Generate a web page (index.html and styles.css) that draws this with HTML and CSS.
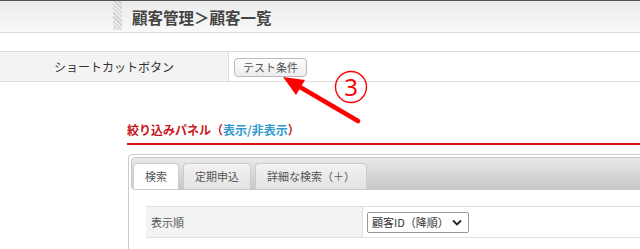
FILE: index.html
```html
<!DOCTYPE html>
<html lang="ja">
<head>
    <meta charset="UTF-8">
    <title>顧客一覧</title>
    <link rel="stylesheet" href="styles.css">
</head>
<body>
<div class="page">
    <div class="header">
        <div class="hatch"></div>
        <h1>顧客管理＞顧客一覧</h1>
    </div>

    <div class="spacer"></div>

    <div class="shortcut">
        <div class="shortcut-label">ショートカットボタン</div>
        <div class="shortcut-body">
            <button class="btn">テスト条件</button>
        </div>
    </div>

    <div class="filter">
        <h2 class="filter-title">絞り込みパネル（<a class="toggle">表示/非表示</a>）</h2>
        <div class="panel">
            <ul class="tabs">
                <li class="tab active">検索</li>
                <li class="tab">定期申込</li>
                <li class="tab">詳細な検索（＋）</li>
            </ul>
            <div class="panel-body">
                <div class="field">
                    <div class="field-label">表示順</div>
                    <div class="field-value">
                        <div class="select">
                            <span>顧客ID（降順）</span>
                            <svg width="10" height="7" viewBox="0 0 10 7"><path d="M1 1.5 L5 5.5 L9 1.5" fill="none" stroke="#222" stroke-width="1.8"/></svg>
                        </div>
                    </div>
                </div>
            </div>
        </div>
    </div>

    <!-- 注釈 -->
    <svg class="note" width="640" height="249" viewBox="0 0 640 249">
        <circle cx="351" cy="87" r="15.5" fill="none" stroke="#f00" stroke-width="1.4"/>
        <text x="351" y="96" text-anchor="middle" class="note-num">3</text>
        <line x1="358" y1="121" x2="294" y2="83.5" stroke="#f00" stroke-width="4.5" stroke-linecap="round"/>
        <polygon points="283,77 305,80 296,95" fill="#f00"/>
    </svg>
</div>
</body>
</html>
```

FILE: styles.css
```css
html, body {
    margin: 0;
    padding: 0;
}

body {
    font-family: "Noto Sans CJK JP", "Noto Sans", sans-serif;
    color: #333;
    background: #fff;
}

.page {
    position: relative;
    width: 640px;
    height: 249px;
    overflow: hidden;
}

.header {
    display: flex;
    align-items: center;
    height: 31px;
    padding-left: 113px;
    border-top: 1px solid #555;
    border-bottom: 1px solid #ddd;
    background: linear-gradient(#ebebeb, #f9f9f9);
}

.hatch {
    align-self: flex-start;
    width: 9px;
    height: 29px;
    margin-right: 10px;
    background: repeating-linear-gradient(45deg, #cfcfcf 0 1px, #e9e9e9 1px 3px);
}

.header h1 {
    margin: 0;
    font-size: 15.5px;
    font-weight: bold;
    color: #444;
    line-height: 20px;
}

.spacer {
    height: 18px;
}

.shortcut {
    display: flex;
    height: 29px;
    border-top: 1px solid #ddd;
    border-bottom: 1px solid #ddd;
}

.shortcut-label {
    width: 228px;
    background: #f3f3f3;
    border-right: 1px solid #ddd;
    font-size: 12px;
    line-height: 29px;
    text-align: center;
    color: #333;
}

.shortcut-body {
    display: flex;
    align-items: center;
    padding-left: 5px;
}

.btn {
    width: 73px;
    height: 19px;
    padding: 0;
    margin-top: 1px;
    font-family: inherit;
    font-size: 11px;
    color: #555;
    border: 1px solid #bbb;
    border-radius: 4px;
    background: linear-gradient(#fdfdfd, #ececec);
}

.filter {
    margin-left: 127px;
    width: 560px;
    margin-top: 40px;
}

.filter-title {
    margin: 0;
    padding-bottom: 5px;
    border-bottom: 2px solid #d11;
    font-size: 12px;
    line-height: 16px;
    font-weight: bold;
    color: #c8161d;
}

.toggle {
    color: #3399cc;
}

.panel {
    margin: 9px 0 0 1px;
    padding: 2px 2px 40px;
    border: 1px solid #ccc;
    border-radius: 4px;
}

.tabs {
    display: flex;
    gap: 4px;
    margin: 0;
    padding: 5px 0 0 1px;
    list-style: none;
    border: 1px solid #c8c8c8;
    border-radius: 4px;
    background: linear-gradient(#e9e9e9, #c8c8c8);
}

.tab {
    height: 25px;
    padding: 0 11px;
    font-size: 11px;
    line-height: 25px;
    color: #555;
    border: 1px solid #ccc;
    border-bottom: none;
    border-radius: 4px 4px 0 0;
    background: linear-gradient(#f2f2f2, #e3e3e3);
}

.tab.active {
    background: #fff;
}

.panel-body {
    padding: 16px 0 0 15px;
}

.field {
    display: flex;
    height: 30px;
    border-top: 1px solid #e0e0e0;
    border-bottom: 1px solid #e0e0e0;
}

.field-label {
    width: 211px;
    padding-left: 5px;
    background: #f3f3f3;
    border-right: 1px solid #e0e0e0;
    font-size: 11px;
    line-height: 30px;
    color: #555;
}

.field-value {
    display: flex;
    align-items: center;
    padding-left: 4px;
}

.select {
    display: flex;
    align-items: center;
    justify-content: space-between;
    box-sizing: border-box;
    width: 102px;
    height: 21px;
    padding: 0 6px 0 4px;
    border: 1px solid #999;
    border-radius: 2px;
    font-size: 11px;
    color: #333;
}

.note {
    position: absolute;
    left: 0;
    top: 0;
    pointer-events: none;
}

.note-num {
    font-family: "Noto Sans", sans-serif;
    font-size: 24px;
    fill: #f00;
}
```
